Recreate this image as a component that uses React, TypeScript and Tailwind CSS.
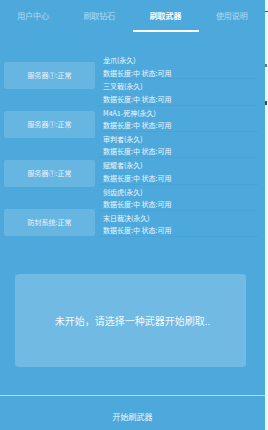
import React from "react";

const font = { fontFamily: '"Noto Sans CJK SC", "Noto Sans", sans-serif' };

const tabs = ["用户中心", "刷取钻石", "刷取武器", "使用说明"];
const servers = ["服务器①:正常", "服务器①:正常", "服务器①:正常", "防封系统:正常"];
const items = ["龙爪(永久)", "三叉戟(永久)", "M4A1-死神(永久)", "审判者(永久)", "赋耀者(永久)", "剑齿虎(永久)", "末日裁决(永久)"];

export default function App() {
  return (
    <div className="w-[268px] h-[430px] flex overflow-hidden" style={font}>
      <div className="w-[265px] h-full bg-[#4da9dc] flex flex-col text-white">
        <div className="grid grid-cols-4 h-[33px]">
          {tabs.map((t, i) => (
            <div key={t} className="flex flex-col">
              <div
                className={
                  "flex-1 flex items-center justify-center pt-[1px] text-[8px] leading-none " +
                  (i === 2 ? "text-white font-bold" : "text-white/55")
                }
              >
                {t}
              </div>
              <div className={"h-[2px] mb-[1px] " + (i === 2 ? "bg-white" : "")} />
            </div>
          ))}
        </div>
        <div className="flex mt-[20px]">
          <div className="w-[98px] flex flex-col gap-[22px] pt-[9px] pl-[4px] pr-[3px]">
            {servers.map((s, i) => (
              <div
                key={i}
                className="h-[27px] bg-white/15 rounded-[2px] flex items-center justify-center text-[7px] text-white/85"
              >
                {s}
              </div>
            ))}
          </div>
          <div className="w-[160px] flex flex-col">
            {items.map((it) => (
              <div
                key={it}
                className="h-[26.33px] border-b border-[#48a3d6] pl-[5px] pt-[1px] text-[7px] leading-[12.5px] text-white/90"
              >
                <div>{it}</div>
                <div>数据长度:中 状态:可用</div>
              </div>
            ))}
          </div>
        </div>
        <div className="ml-[15px] mr-[19px] mt-[37px] h-[93px] rounded-[4px] bg-white/20 flex items-center justify-center pl-[4px] text-[10px] text-white/95">
          未开始，请选择一种武器开始刷取..
        </div>
        <div className="mt-[28px] h-[1px] bg-[#b2def6]" />
        <div className="flex-1 flex items-center justify-center pt-[7px] text-[8px] text-white/90">
          开始刷武器
        </div>
      </div>
      <div className="w-[3px] h-full bg-[#eef6fb] flex flex-col">
        <div className="h-[11px]" />
        <div className="h-[1px] w-[3px] bg-[#555]" />
        <div className="h-[52px]" />
        <div className="h-[3px] w-[2px] bg-[#6b7280]" />
        <div className="h-[34px]" />
        <div className="h-[4px] w-[2px] bg-[#444]" />
      </div>
    </div>
  );
}
